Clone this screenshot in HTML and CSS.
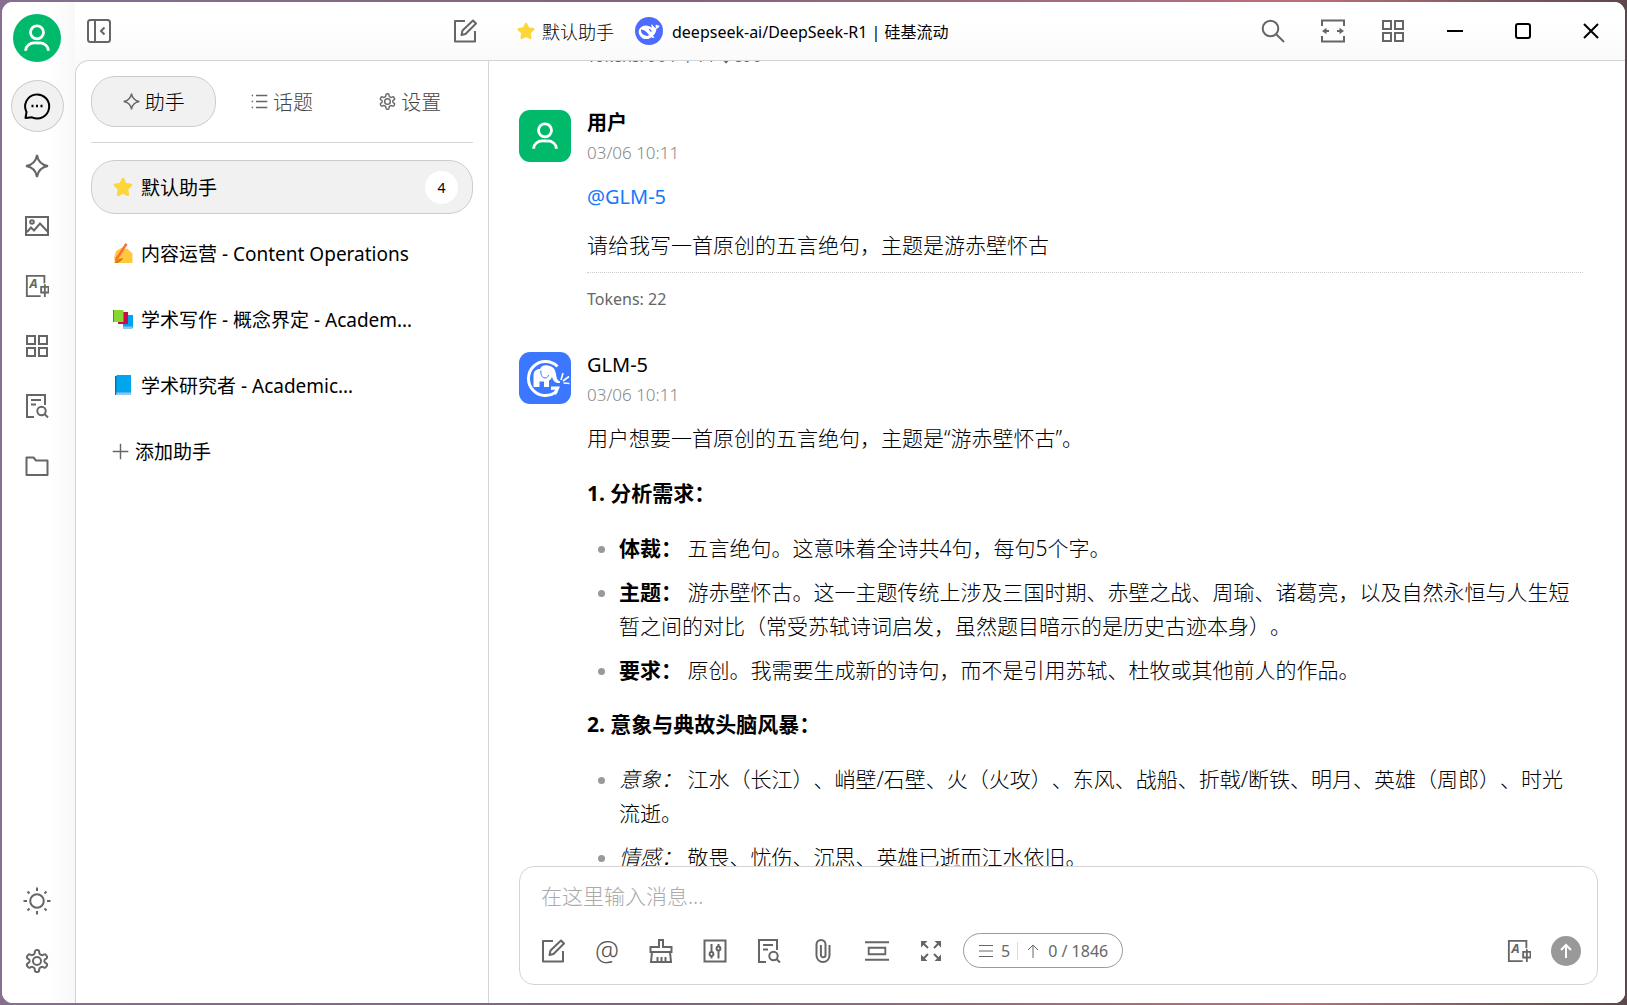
FILE: index.html
```
<!DOCTYPE html>
<html lang="zh-CN">
<head>
  <meta charset="UTF-8">
  <title>默认助手</title>
  <link rel="stylesheet" href="styles.css">
</head>
<body>

  <!-- Icon shapes shared by the whole page -->
  <svg class="sprite" aria-hidden="true">
    <symbol id="i-user" viewBox="0 0 24 24"><circle cx="12" cy="8" r="4.6"/><path d="M4 21v-.5a6 5.500 0 0 1 6-5h4a6 5.500 0 0 1 6 5v.5"/></symbol>
    <symbol id="i-chat" viewBox="0 0 28 28"><path d="M2.500 26l1-6A12 12 0 1 1 9 25.300z" stroke-linejoin="round"/><path d="M8.500 14h2M13 14h2M17.500 14h2" stroke-width="2.400"/></symbol>
    <symbol id="i-spark" viewBox="0 0 24 24"><path d="M12 1C13 7.500 16.500 11 23 12 16.500 13 13 16.500 12 23 11 16.500 7.500 13 1 12 7.500 11 11 7.500 12 1z"/></symbol>
    <symbol id="i-image" viewBox="0 0 24 24"><path d="M1 3h22v18H1zM2 18l4-4.500 3 3 6-7 8 8.500"/><circle cx="7" cy="8" r="1.800"/></symbol>
    <symbol id="i-trans" viewBox="0 0 26 26"><path d="M21 10V2H2v22h15M17.500 14h8v6h-8zM21.500 11v14"/><text x="5" y="15.500">A</text></symbol>
    <symbol id="i-grid" viewBox="0 0 24 24"><path d="M2 2h8v8H2zM14 2h8v8h-8zM2 14h8v8H2zM14 14h8v8h-8z"/></symbol>
    <symbol id="i-doc" viewBox="0 0 24 24"><path d="M9 23H2V1h18v10M6 6h10M6 10.500h5M19.500 20l3.500 3.500"/><circle cx="16.500" cy="17" r="4.200"/></symbol>
    <symbol id="i-folder" viewBox="0 0 24 24"><path d="M1.500 21V3.500h7l2.500 3h11.500V21z" stroke-linejoin="round"/></symbol>
    <symbol id="i-sun" viewBox="0 0 28 28"><circle cx="14" cy="14" r="6.800"/><path d="M14 .5v3.500M14 24v3.500M.5 14H4M24 14h3.500M4.500 4.500l2 2M21.500 21.500l2 2M4.500 23.500l2-2M21.500 6.500l2-2"/></symbol>
    <symbol id="i-gear" viewBox="0 0 24 24"><circle cx="12" cy="12" r="4"/><path d="M12.220 1h-.44a2 2 0 0 0-2 2v.68a2 2 0 0 1-1 1.730l-.93.55a2 2 0 0 1-2 0l-.45-.28a2 2 0 0 0-2.730.73l-.42.68a2 2 0 0 0 .73 2.730l.65.4a2 2 0 0 1 1 1.720a2 2 0 0 1-1 1.840l-.65.39a2 2 0 0 0-.73 2.730l.42.68a2 2 0 0 0 2.730.73l.45-.28a2 2 0 0 1 2 0l.93.55a2 2 0 0 1 1 1.730V21a2 2 0 0 0 2 2h.44a2 2 0 0 0 2-2v-.68a2 2 0 0 1 1-1.730l.93-.55a2 2 0 0 1 2 0l.45.28a2 2 0 0 0 2.730-.73l.42-.69a2 2 0 0 0-.73-2.730l-.65-.38a2 2 0 0 1-1-1.840a2 2 0 0 1 1-1.740l.65-.39a2 2 0 0 0 .73-2.730l-.42-.68a2 2 0 0 0-2.730-.73l-.45.28a2 2 0 0 1-2 0l-.93-.55a2 2 0 0 1-1-1.730V3a2 2 0 0 0-2-2z"/></symbol>
    <symbol id="i-panel" viewBox="0 0 24 24"><rect x="1" y="1" width="22" height="22" rx="2.500"/><path d="M8 1v22M17.500 8.500L14 12l3.500 3.500"/></symbol>
    <symbol id="i-edit" viewBox="0 0 24 24"><path d="M12 2H2v20.500h20V12M8.500 16l1-4.500L20 1.500l3 3L12.500 15z" stroke-linejoin="round"/></symbol>
    <symbol id="i-list" viewBox="0 0 24 24"><path d="M7 3.500h16M7 12h16M7 20.500h16M1 3.500h2M1 12h2M1 20.500h2"/></symbol>
    <symbol id="i-plus" viewBox="0 0 24 24"><path d="M12 1v22M1 12h22"/></symbol>
    <symbol id="i-search" viewBox="0 0 24 24"><circle cx="9.500" cy="9.500" r="7.800"/><path d="M15 15l8 8"/></symbol>
    <symbol id="i-wide" viewBox="0 0 24 24"><path d="M1 7V1.500h22V7M1 17v5.500h22V17M3 12h5M16 12h5"/><path class="fill" d="M1 12l4.500-3.200v6.400zM23 12l-4.500-3.200v6.400z"/></symbol>
    <symbol id="i-brush" viewBox="0 0 24 24"><path d="M10 8V1h4v7h8.500v5h-21V8zM3 13L2 23h20l-1-10M8.500 23v-5M12.500 23v-5M16.500 23v-5"/></symbol>
    <symbol id="i-slider" viewBox="0 0 24 24"><path d="M1.500 1.500h21v21h-21zM8.500 5v8M8.500 17v2.500M15.500 5v2.500M15.500 11.500v8"/><circle cx="8.500" cy="15" r="1.900"/><circle cx="15.500" cy="9.500" r="1.900"/></symbol>
    <symbol id="i-clip" viewBox="0 0 24 24"><path d="M18.500 6v10.500a6.500 6.500 0 0 1-13 0V5.500a4.500 4.500 0 0 1 9 0V16a2.300 2.300 0 0 1-4.600 0V6"/></symbol>
    <symbol id="i-rows" viewBox="0 0 26 24"><path d="M0 2.500h26M0 21.500h26M4 8.500h18v7H4z"/></symbol>
    <symbol id="i-expand" viewBox="0 0 24 24"><path d="M3 3l6 6M21 3l-6 6M3 21l6-6M21 21l-6-6"/><path class="fill" d="M2 2h6.500L2 8.500zM22 2v6.500L15.500 2zM2 22v-6.500L8.500 22zM22 22h-6.500l6.500-6.500z"/></symbol>
    <symbol id="i-menu" viewBox="0 0 16 16"><path d="M1 2.500h14M1 8h14M1 13.500h14"/></symbol>
    <symbol id="i-up" viewBox="0 0 16 16"><path d="M8 15V2M3 7l5-5 5 5"/></symbol>
    <symbol id="i-star" viewBox="0 0 20 20"><path fill="#fdd53c" stroke="#fdd53c" stroke-width="2.500" stroke-linejoin="round" d="M10 2l2.500 5 5.700.9-4.200 4.200.9 5.700-4.900-2.500-4.900 2.500.9-5.700L1.800 7.900l5.700-.9z"/></symbol>
    <symbol id="i-whale" viewBox="0 0 28 28"><circle cx="14" cy="14" r="14" fill="#4d6bfe"/><path fill="#fff" d="M24.500 8.500c-1.600.2-2.500-.1-3.500-1-.7.9-.6 2.300.3 3.300-1.500-.1-2.400-.9-3.200-2.100-.6-.9-.9-1.300-1.800-1.200.2 1.200.1 2.200.8 3.200C14.500 9 11.500 7.500 8 9c-4 1.700-5.300 5.500-3.500 8.900 1.800 3.400 5.300 4.800 8.700 4 1.300-.3 2.300-.9 3.200-1.700 1 .6 2.200.7 3.300.3-.5-.5-1.200-.9-1.700-1.700 2.800-2.600 3.300-5 3.400-7.100 1.600-.3 2.800-1.500 3.100-3.200z"/><path fill="#4d6bfe" d="M6 12.500c2.500-.3 5.500 1.800 8 5.500l-1.200 1c-2-.3-4.700-.8-5.800-2.500-.7-1.300-1.200-2.700-1-4zM13.500 11.800c1.900-.2 3 1.300 3.300 3.200-1.300 0-1.900-.8-2.200-1.400-.3-.6-.6-1.300-1.100-1.800z"/></symbol>
    <symbol id="i-elephant" viewBox="0 0 52 52"><path fill="none" stroke="#fff" stroke-width="3" d="M38.500 14.500A17 17 0 1 0 38 39"/><path fill="#fff" d="M14.500 35V24c0-5 2.500-7 6.500-7 1-3 4-4.500 8-3.500 5 .8 7.500 4 8 8.500.4 4 1.300 6.500 4 7.500v1.500c-5 .5-7.200-2.500-8-6.500-.5 2-1.500 3.500-3 4V35h-5v-5.500h-4.500V35zM32 34.500h9l-4 8.500-2.500-2 1.500-3.500-4 .5z"/><path fill="none" stroke="#fff" stroke-width="1.600" d="M42 28l2-7M44 29l6-4.500M44.500 31l6 .5"/><path fill="none" stroke="#3b78ff" stroke-width="1" d="M22 18.500c-.5 3.500.5 7 4 7.500 2 0 3-1 3.500-3"/></symbol>
    <symbol id="i-hand" viewBox="0 0 20 20"><path fill="#ffc83d" d="M3 8l6-3.500 2 1.500 3-.5 5.500 5V20H7L2 19l-1-4z"/><path fill="#d67d00" d="M1 20l5-4 4-1-1 2-4 3z"/><path fill="#ff6b3c" d="M12.500 0l2 1.500L4.500 17 2 19l.3-3.500z"/></symbol>
    <symbol id="i-books" viewBox="0 0 20 20"><path fill="#00a6ed" d="M10 6h10v13H10z"/><path fill="#9bc3e8" d="M10 17.500h9.500V20H10z"/><path fill="#ca0b4a" d="M5 3h10v12H5z"/><path fill="#86d72f" d="M0 1h10.500v12H0z"/><path fill="#44911b" d="M0 1h1v12H0z"/></symbol>
    <symbol id="i-book" viewBox="0 0 20 20"><path fill="#0074ba" d="M2 1h3v19H2z"/><path fill="#00a6ed" d="M3.500 0H18v18H3.500z"/><path fill="#9bc3e8" d="M3.500 17.500H18V20h-15z"/></symbol>
  </svg>

  <div class="window">
    <nav class="rail">
      <div class="avatar-round"><svg><use href="#i-user"/></svg></div>
      <button class="rail-btn active" aria-label="聊天"><svg class="icon lg"><use href="#i-chat"/></svg></button>
      <button class="rail-btn" aria-label="助手库"><svg class="icon"><use href="#i-spark"/></svg></button>
      <button class="rail-btn" aria-label="绘画"><svg class="icon"><use href="#i-image"/></svg></button>
      <button class="rail-btn" aria-label="翻译"><svg class="icon"><use href="#i-trans"/></svg></button>
      <button class="rail-btn" aria-label="小程序"><svg class="icon"><use href="#i-grid"/></svg></button>
      <button class="rail-btn" aria-label="知识库"><svg class="icon"><use href="#i-doc"/></svg></button>
      <button class="rail-btn" aria-label="文件"><svg class="icon"><use href="#i-folder"/></svg></button>
      <button class="rail-btn bottom" aria-label="主题"><svg class="icon lg"><use href="#i-sun"/></svg></button>
      <button class="rail-btn" aria-label="设置"><svg class="icon"><use href="#i-gear"/></svg></button>
    </nav>

    <div class="main">
      <header class="titlebar">
        <div class="title-left">
          <button aria-label="收起侧栏"><svg class="icon"><use href="#i-panel"/></svg></button>
          <button aria-label="新建话题"><svg class="icon"><use href="#i-edit"/></svg></button>
        </div>
        <div class="title-name">
          <svg class="star"><use href="#i-star"/></svg>
          <span>默认助手</span>
        </div>
        <button class="model">
          <svg><use href="#i-whale"/></svg>
          <span>deepseek-ai/DeepSeek-R1 | 硅基流动</span>
        </button>
        <div class="title-tools">
          <button aria-label="搜索"><svg class="icon"><use href="#i-search"/></svg></button>
          <button aria-label="宽屏"><svg class="icon"><use href="#i-wide"/></svg></button>
          <button aria-label="小程序"><svg class="icon"><use href="#i-grid"/></svg></button>
        </div>
        <div class="win-controls">
          <button aria-label="最小化"><svg viewBox="0 0 16 16"><path d="M0 8h16"/></svg></button>
          <button aria-label="最大化"><svg viewBox="0 0 16 16"><rect x="1" y="1" width="14" height="14" rx="2"/></svg></button>
          <button aria-label="关闭"><svg viewBox="0 0 16 16"><path d="M1 1l14 14M15 1L1 15"/></svg></button>
        </div>
      </header>

      <div class="content">
        <aside class="sidebar">
          <div class="tabs">
            <button class="tab active"><svg class="icon sm"><use href="#i-spark"/></svg>助手</button>
            <button class="tab"><svg class="icon sm"><use href="#i-list"/></svg>话题</button>
            <button class="tab"><svg class="icon sm"><use href="#i-gear"/></svg>设置</button>
          </div>
          <div class="assistants">
            <button class="assistant active"><svg class="emoji"><use href="#i-star"/></svg><span>默认助手</span><b class="count">4</b></button>
            <button class="assistant"><svg class="emoji"><use href="#i-hand"/></svg><span>内容运营 - Content Operations</span></button>
            <button class="assistant"><svg class="emoji"><use href="#i-books"/></svg><span>学术写作 - 概念界定 - Academ…</span></button>
            <button class="assistant"><svg class="emoji"><use href="#i-book"/></svg><span>学术研究者 - Academic…</span></button>
            <button class="assistant add"><svg class="icon sm"><use href="#i-plus"/></svg><span>添加助手</span></button>
          </div>
        </aside>

        <main class="chat">
          <div class="messages">
            <div class="tokens previous">Tokens: 904 ↑14 ↓890</div>

            <article class="message">
              <div class="avatar user"><svg><use href="#i-user"/></svg></div>
              <div class="body">
                <div class="name strong">用户</div>
                <div class="time">03/06 10:11</div>
                <div class="text">
                  <p class="mention"><a href="#">@GLM-5</a></p>
                  <p>请给我写一首原创的五言绝句，主题是游赤壁怀古</p>
                </div>
                <div class="tokens">Tokens: 22</div>
              </div>
            </article>

            <article class="message">
              <div class="avatar glm"><svg><use href="#i-elephant"/></svg></div>
              <div class="body">
                <div class="name">GLM-5</div>
                <div class="time">03/06 10:11</div>
                <div class="text">
                  <p>用户想要一首原创的五言绝句，主题是“游赤壁怀古”。</p>
                  <p><strong>1. 分析需求：</strong></p>
                  <ul>
                    <li><strong>体裁：</strong> 五言绝句。这意味着全诗共4句，每句5个字。</li>
                    <li><strong>主题：</strong> 游赤壁怀古。这一主题传统上涉及三国时期、赤壁之战、周瑜、诸葛亮，以及自然永恒与人生短暂之间的对比（常受苏轼诗词启发，虽然题目暗示的是历史古迹本身）。</li>
                    <li><strong>要求：</strong> 原创。我需要生成新的诗句，而不是引用苏轼、杜牧或其他前人的作品。</li>
                  </ul>
                  <p><strong>2. 意象与典故头脑风暴：</strong></p>
                  <ul>
                    <li><em>意象：</em> 江水（长江）、峭壁/石壁、火（火攻）、东风、战船、折戟/断铁、明月、英雄（周郎）、时光流逝。</li>
                    <li><em>情感：</em> 敬畏、忧伤、沉思、英雄已逝而江水依旧。</li>
                  </ul>
                </div>
              </div>
            </article>
          </div>

          <div class="composer">
            <textarea rows="1" aria-label="消息" placeholder="在这里输入消息..."></textarea>
            <div class="toolbar">
              <button aria-label="新话题"><svg class="icon"><use href="#i-edit"/></svg></button>
              <button class="at" aria-label="提及模型">@</button>
              <button aria-label="清空"><svg class="icon"><use href="#i-brush"/></svg></button>
              <button aria-label="参数"><svg class="icon"><use href="#i-slider"/></svg></button>
              <button aria-label="知识库"><svg class="icon"><use href="#i-doc"/></svg></button>
              <button aria-label="附件"><svg class="icon"><use href="#i-clip"/></svg></button>
              <button aria-label="上下文"><svg class="icon"><use href="#i-rows"/></svg></button>
              <button aria-label="展开"><svg class="icon"><use href="#i-expand"/></svg></button>
              <div class="usage">
                <svg class="icon xs"><use href="#i-menu"/></svg><span>5</span>
                <i></i>
                <svg class="icon xs"><use href="#i-up"/></svg><span>0 / 1846</span>
              </div>
              <button class="translate" aria-label="翻译"><svg class="icon"><use href="#i-trans"/></svg></button>
              <button class="send" aria-label="发送"><svg class="icon xs"><use href="#i-up"/></svg></button>
            </div>
          </div>
        </main>
      </div>
    </div>
  </div>

</body>
</html>
```
FILE: styles.css
```
* {
  box-sizing: border-box;
}

body {
  margin: 0;
  height: 100vh;
  padding: 2px;
  font-family: "Noto Sans", "Noto Sans CJK SC", sans-serif;
  font-size: 19px;
  color: #000;
  background: linear-gradient(90deg, #86708f, #80647c 40%, #b8707c 80%, #5c484c);
  text-spacing-trim: space-all;
}

button {
  padding: 0;
  border: none;
  background: none;
  font: inherit;
  color: inherit;
  display: flex;
  align-items: center;
  justify-content: center;
  cursor: pointer;
}

.sprite {
  display: none;
}

svg {
  display: block;
  flex: none;
}

.icon {
  width: 24px;
  height: 24px;
  fill: none;
  stroke: #666;
  stroke-width: 2;
}

.icon.lg {
  width: 28px;
  height: 28px;
}

.icon.sm {
  width: 17px;
  height: 17px;
}

.icon.xs {
  width: 16px;
  height: 16px;
  stroke-width: 1;
}

#i-trans text {
  font-size: 14px;
  font-weight: bold;
  font-style: italic;
  fill: #666;
  stroke: none;
}

.fill {
  fill: #666;
  stroke: none;
}

/* window frame */
.window {
  height: 100%;
  display: flex;
  overflow: hidden;
  background: #fff;
  border-radius: 11px;
}

.rail {
  width: 73px;
  flex: none;
  padding: 12px 3px 16px 0;
  display: flex;
  flex-direction: column;
  align-items: center;
  gap: 8px;
  background: linear-gradient(90deg, #fff 60%, #f8f8f8);
}

.avatar-round {
  width: 48px;
  height: 48px;
  margin-bottom: 10px;
  border-radius: 50%;
  background: #00b96b;
  display: flex;
  align-items: center;
  justify-content: center;
}

.avatar-round svg,
.avatar.user svg {
  width: 34px;
  height: 34px;
  fill: none;
  stroke: #fff;
  stroke-width: 2;
}

.rail-btn {
  width: 53px;
  height: 52px;
  flex: none;
  border-radius: 50%;
}

.rail-btn.active {
  background: #f1f1f1;
  border: 1px solid #ccc;
}

.rail-btn.active .icon {
  stroke: #000;
}

.rail-btn.bottom {
  margin-top: auto;
}

.main {
  flex: 1;
  min-width: 0;
  display: flex;
  flex-direction: column;
  background: linear-gradient(#fff 20px, #fafafa 60px);
}

/* title bar */
.titlebar {
  height: 58px;
  flex: none;
  display: flex;
  align-items: center;
}

.title-left {
  width: 414px;
  padding: 0 12px;
  display: flex;
  justify-content: space-between;
}

.title-name {
  display: flex;
  align-items: center;
  gap: 7px;
  padding: 0 21px 0 28px;
  font-size: 18px;
  font-weight: 300;
}

.star {
  width: 18px;
  height: 18px;
}

.model {
  gap: 9px;
  font-size: 16px;
}

.model svg {
  width: 28px;
  height: 28px;
}

.title-tools {
  margin-left: auto;
  display: flex;
  gap: 36px;
}

.win-controls {
  display: flex;
  gap: 52px;
  padding: 0 26px 0 42px;
}

.win-controls svg {
  width: 16px;
  height: 16px;
  fill: none;
  stroke: #000;
  stroke-width: 2;
}

.content {
  flex: 1;
  min-height: 0;
  display: flex;
  background: #fff;
  border-top: 1px solid #d4d4d4;
  border-left: 1px solid #d4d4d4;
  border-top-left-radius: 14px;
}

/* sidebar */
.sidebar {
  width: 413px;
  flex: none;
  padding: 15px;
  border-right: 1px solid #d4d4d4;
}

.tabs {
  display: flex;
  gap: 3px;
  padding-bottom: 15px;
  border-bottom: 1px solid #d4d4d4;
}

.tab {
  flex: 1;
  height: 51px;
  gap: 5px;
  border: 1px solid transparent;
  border-radius: 24px;
  font-size: 20px;
  font-weight: 300;
  color: #444;
}

.tab.active {
  background: #f1f1f1;
  border-color: #ccc;
  color: #000;
}

.assistants {
  display: flex;
  flex-direction: column;
  gap: 12px;
  padding-top: 17px;
}

.assistant {
  height: 54px;
  justify-content: flex-start;
  gap: 8px;
  padding: 0 14px 0 21px;
  border: 1px solid transparent;
  border-radius: 24px;
  white-space: nowrap;
}

.assistant.active {
  background: #f1f1f1;
  border-color: #ccc;
}

.assistant.add {
  gap: 6px;
  padding-left: 20px;
}

.emoji {
  width: 20px;
  height: 20px;
}

.count {
  width: 33px;
  height: 33px;
  margin-left: auto;
  border-radius: 50%;
  background: #fff;
  font-size: 14px;
  font-weight: normal;
  line-height: 33px;
}

/* chat */
.chat {
  flex: 1;
  min-width: 0;
  display: flex;
  flex-direction: column;
  padding: 0 27px 18px 30px;
}

.messages {
  flex: 1;
  min-height: 0;
  overflow: hidden;
}

.tokens {
  height: 24px;
  font-size: 16px;
  line-height: 24px;
  color: #666;
}

.tokens.previous {
  margin: -17px 0 42px 68px;
}

.message {
  display: flex;
  gap: 16px;
  padding-right: 15px;
  margin-bottom: 41px;
}

.avatar {
  width: 52px;
  height: 52px;
  flex: none;
  display: flex;
  align-items: center;
  justify-content: center;
  border-radius: 11px;
  background: #00b96b;
}

.avatar.glm {
  background: #3b78ff;
}

.avatar.glm svg {
  width: 52px;
  height: 52px;
}

.body {
  flex: 1;
  min-width: 0;
}

.name {
  font-size: 20px;
  line-height: 26px;
}

.name.strong {
  font-weight: bold;
}

.time {
  margin-top: 3px;
  font-size: 17px;
  font-weight: 300;
  line-height: 28px;
  color: #888;
}

.text {
  padding-top: 12px;
  font-size: 21px;
  font-weight: 300;
  line-height: 34px;
}

.text p {
  margin: 0 0 21px;
}

.text a {
  color: #1677ff;
  font-size: 20px;
  font-weight: 400;
  text-decoration: none;
}

.text strong {
  font-weight: 700;
}

.text .mention {
  margin-bottom: 14px;
}

.text ul {
  margin: 0 0 20px;
  padding-left: 32px;
}

.text li + li {
  margin-top: 10px;
}

.text li::marker {
  color: #999;
}

.text + .tokens {
  margin-top: -11px;
  padding-top: 14px;
  height: 39px;
  border-top: 1px dotted #ccc;
}

/* input box */
.composer {
  flex: none;
  height: 119px;
  padding: 12px 16px 16px 21px;
  border: 1px solid #d4d4d4;
  border-radius: 15px;
  display: flex;
  flex-direction: column;
  justify-content: space-between;
}

.composer textarea {
  width: 100%;
  height: 34px;
  padding: 0;
  border: none;
  outline: none;
  resize: none;
  overflow: hidden;
  background: none;
  font-family: inherit;
  font-size: 21px;
  font-weight: 300;
  line-height: 34px;
}

.composer textarea::placeholder {
  color: #aaa;
}

.toolbar {
  display: flex;
  align-items: center;
  gap: 30px;
}

.at {
  width: 24px;
  height: 24px;
  font-size: 27px;
  font-weight: 300;
  line-height: 24px;
  color: #555;
}

.usage {
  height: 35px;
  margin-left: -10px;
  padding: 0 14px;
  display: flex;
  align-items: center;
  gap: 7px;
  border: 1px solid #999;
  border-radius: 18px;
  font-size: 16px;
  color: #666;
}

.usage i {
  width: 1px;
  height: 18px;
  background: #ddd;
}

.translate {
  margin-left: auto;
}

.send {
  width: 30px;
  height: 30px;
  margin-left: -10px;
  border-radius: 50%;
  background: #999;
}

.send .icon {
  stroke: #fff;
  stroke-width: 2;
}
```
